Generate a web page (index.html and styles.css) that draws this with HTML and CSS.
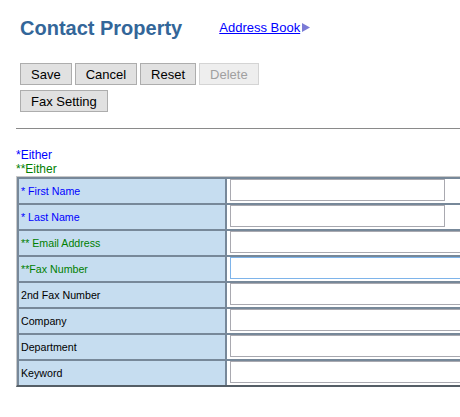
FILE: index.html
```html
<!DOCTYPE html>
<html lang="en">
<head>
    <meta charset="UTF-8">
    <title>Contact Property</title>
    <link rel="stylesheet" href="styles.css">
</head>
<body>
    <div class="header">
        <h1>Contact Property</h1>
        <a class="book-link" href="#">Address Book</a>
        <svg class="arrow" width="8" height="9" viewBox="0 0 8 9"><polygon points="0,0 8,4.5 0,9" fill="#7b7bd6"/></svg>
    </div>

    <div class="toolbar">
        <button>Save</button>
        <button>Cancel</button>
        <button>Reset</button>
        <button disabled>Delete</button>
    </div>
    <div class="toolbar second">
        <button>Fax Setting</button>
    </div>

    <div class="rule"></div>

    <div class="legend">
        <div class="req-one">*Either</div>
        <div class="req-two last">**Either</div>
    </div>

    <table class="contact">
        <tr>
            <td class="label req-one">* First Name</td>
            <td class="field"><input type="text" class="short"></td>
        </tr>
        <tr>
            <td class="label req-one">* Last Name</td>
            <td class="field"><input type="text" class="short"></td>
        </tr>
        <tr>
            <td class="label req-two">** Email Address</td>
            <td class="field"><input type="text"></td>
        </tr>
        <tr>
            <td class="label req-two">**Fax Number</td>
            <td class="field"><input type="text" class="active"></td>
        </tr>
        <tr>
            <td class="label">2nd Fax Number</td>
            <td class="field"><input type="text"></td>
        </tr>
        <tr>
            <td class="label">Company</td>
            <td class="field"><input type="text"></td>
        </tr>
        <tr>
            <td class="label">Department</td>
            <td class="field"><input type="text"></td>
        </tr>
        <tr>
            <td class="label">Keyword</td>
            <td class="field"><input type="text"></td>
        </tr>
    </table>
</body>
</html>
```

FILE: styles.css
```css
html {
    overflow: hidden;
}
body {
    font-family: Arial, "Liberation Sans", sans-serif;
    margin: 0;
    background-color: #fff;
}
.header {
    display: flex;
    align-items: flex-start;
    padding: 17px 0 0 20px;
}
h1 {
    margin: 0;
    font-size: 20px;
    line-height: 23px;
    color: #336699;
}
.book-link {
    margin: 3px 0 0 37px;
    font-size: 13px;
    line-height: 15px;
    color: #0000ff;
}
.arrow {
    margin: 6px 0 0 2px;
}
.toolbar {
    display: flex;
    gap: 3px;
    padding-left: 20px;
    margin-top: 23px;
}
.toolbar.second {
    margin-top: 5px;
}
button {
    height: 22px;
    padding: 0 10px;
    font-family: Arial, "Liberation Sans", sans-serif;
    font-size: 13px;
    color: #000;
    background-color: #e1e1e1;
    border: 1px solid #adadad;
    border-radius: 0;
}
button:disabled {
    color: #a0a0a0;
    background-color: #eeeeee;
    border-color: #d4d4d4;
}
.rule {
    margin: 16px 0 0 16px;
    border-top: 1px solid #8a8a8a;
}
.legend {
    margin: 19px 0 0 16px;
    font-size: 12px;
    line-height: 15px;
}
.legend .last {
    line-height: 13px;
}
.req-one {
    color: #0000ff;
}
.req-two {
    color: #008000;
}
.contact {
    margin-left: 16px;
    width: 600px;
    border-collapse: separate;
    border-spacing: 0;
    border-top: 1px solid #c8c8c8;
    border-left: 1px solid #c8c8c8;
    border-bottom: 2px solid #555e66;
}
.contact td {
    height: 24px;
    padding: 0;
    border-top: 2px solid #778899;
    border-left: 2px solid #778899;
}
.label {
    width: 204px;
    padding-left: 2px !important;
    background-color: #c6ddf0;
    font-size: 8pt;
    vertical-align: middle;
}
.label:not(.req-one):not(.req-two) {
    color: #000;
}
.field {
    padding-left: 3px !important;
    vertical-align: top;
    background-color: #fff;
}
input {
    display: block;
    box-sizing: border-box;
    width: 330px;
    height: 22px;
    margin: 0;
    border: 1px solid #a9a9b0;
    font-size: 13px;
}
input.short {
    width: 215px;
}
input.active {
    border-color: #7eb4ea;
}
```
